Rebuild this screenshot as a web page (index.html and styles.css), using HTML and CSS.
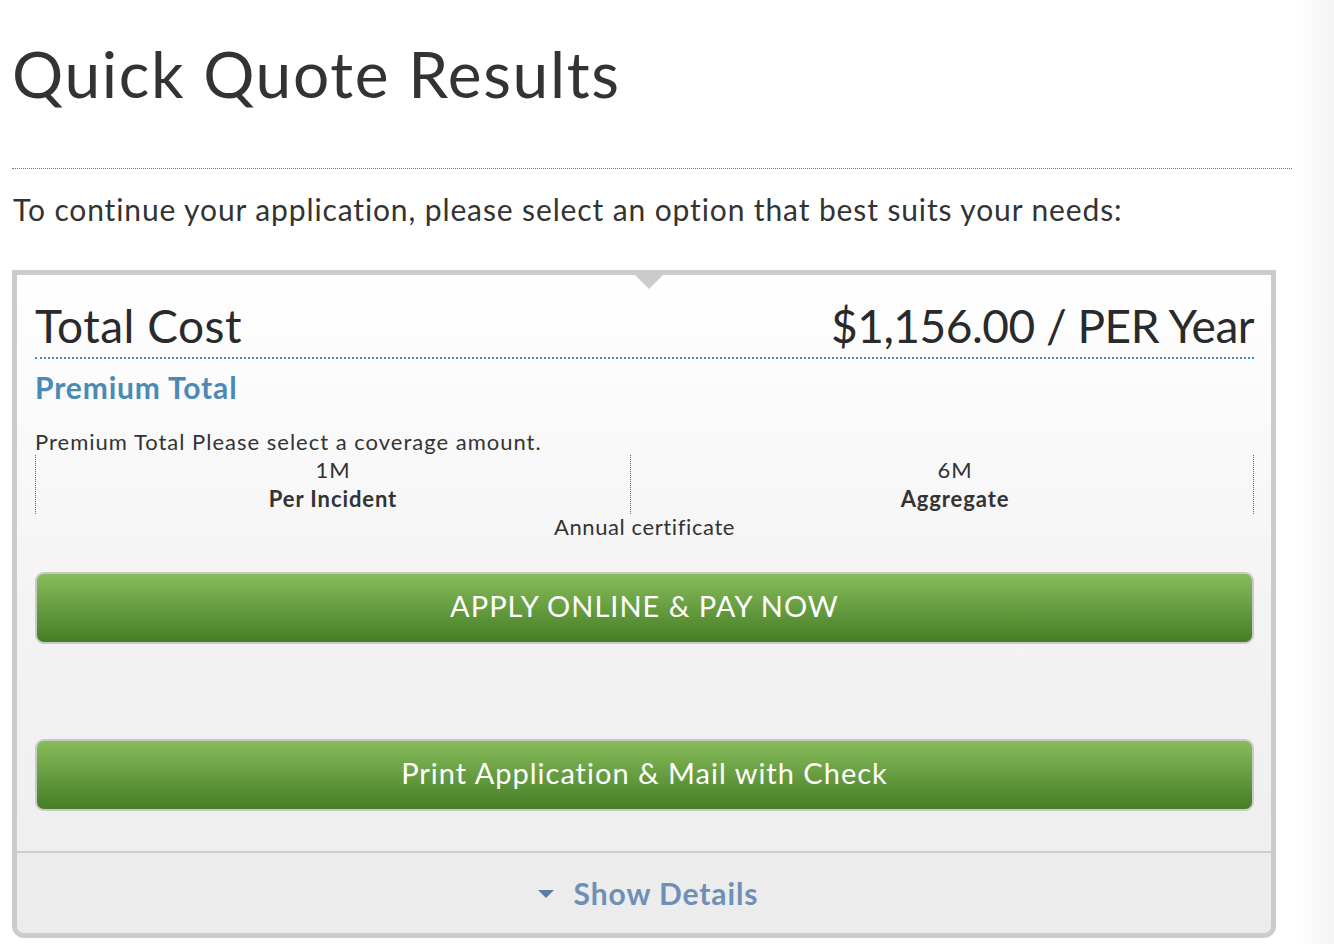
FILE: index.html
```html
<!DOCTYPE html>
<html>
<head>
<meta charset="utf-8">
<title>Quick Quote Results</title>
<link rel="stylesheet" href="styles.css">
</head>
<body>
<div class="page">
  <h1 class="title">Quick Quote Results</h1>
  <div class="rule"></div>
  <p class="intro">To continue your application, please select an option that best suits your needs:</p>
  <div class="box">
    <div class="notch"></div>
    <div class="main">
      <div class="cost-row">
        <span class="cost-label">Total Cost</span>
        <span class="cost-value">$1,156.00 / PER Year</span>
      </div>
      <div class="premium">Premium Total</div>
      <div class="note">Premium Total Please select a coverage amount.</div>
      <div class="limits">
        <div class="limit">
          <div class="limit-amt">1M</div>
          <div class="limit-name">Per Incident</div>
        </div>
        <div class="limit limit-right">
          <div class="limit-amt">6M</div>
          <div class="limit-name">Aggregate</div>
        </div>
      </div>
      <div class="cert">Annual certificate</div>
      <div class="btn btn-first">APPLY ONLINE &amp; PAY NOW</div>
      <div class="btn btn-second">Print Application &amp; Mail with Check</div>
    </div>
    <div class="details">
      <span class="caret"></span>
      <span class="details-text">Show Details</span>
    </div>
  </div>
</div>
</body>
</html>
```

FILE: styles.css
```css
html, body {
  margin: 0;
  padding: 0;
}
body {
  width: 1334px;
  height: 944px;
  overflow: hidden;
  font-family: Lato, "Open Sans", sans-serif;
  color: #333;
  background: linear-gradient(to right, #ffffff 0, #ffffff 1292px, #f5f5f5 1334px);
}
.page {
  padding: 0 42px 0 12px;
}
.title {
  margin: 0;
  padding-top: 31px;
  font-size: 64px;
  font-weight: 400;
  line-height: 86px;
  color: #333;
  letter-spacing: 1.65px;
}
.rule {
  margin-top: 51px;
  border-top: 1px dotted #777;
}
.intro {
  margin: 22px 0 0 1px;
  font-size: 30px;
  line-height: 36px;
  color: #333;
  letter-spacing: 0.88px;
}
.box {
  position: relative;
  margin-top: 43px;
  width: 1254px;
  border: 5px solid #ccc;
  border-radius: 0 0 12px 12px;
  background: #ececec;
}
.notch {
  position: absolute;
  left: 618px;
  top: 0;
  width: 0;
  height: 0;
  border-left: 14px solid transparent;
  border-right: 14px solid transparent;
  border-top: 14px solid #ccc;
}
.main {
  padding: 22px 17px 40px 18px;
  background: linear-gradient(to bottom, #ffffff 0, #f3f3f3 60%, #efefef 100%);
  border-bottom: 2px solid #ccc;
}
.cost-row {
  display: flex;
  justify-content: space-between;
  align-items: baseline;
  border-bottom: 2px dotted #4a8ab8;
  padding-bottom: 2px;
}
.cost-label, .cost-value {
  font-size: 46px;
  line-height: 58px;
  color: #2a2a2a;
}
.cost-label {
  letter-spacing: 0.5px;
}
.cost-value {
  letter-spacing: -0.5px;
}
.premium {
  margin-top: 10px;
  font-size: 30px;
  line-height: 36px;
  font-weight: 700;
  color: #4a8ab4;
  letter-spacing: 0.85px;
}
.note {
  margin-top: 23px;
  font-size: 22px;
  line-height: 27px;
  color: #333;
  letter-spacing: 1px;
}
.limits {
  display: grid;
  grid-template-columns: 595px 1fr;
  border-right: 1px dotted #2f73aa;
}
.limit {
  border-left: 1px dotted #2f73aa;
  text-align: center;
  font-size: 22px;
  line-height: 29px;
  padding-bottom: 1px;
  letter-spacing: 0.9px;
}
.limit-right {
  padding-left: 26px;
}
.limit-name {
  font-weight: 700;
}
.cert {
  text-align: center;
  font-size: 22px;
  line-height: 26px;
  letter-spacing: 0.6px;
}
.btn {
  height: 68px;
  border: 2px solid #c9c9c9;
  border-radius: 9px;
  background: linear-gradient(to bottom, #86bc5a 0, #6aa043 45%, #467d25 100%);
  color: #fff;
  text-align: center;
  font-size: 29px;
  line-height: 64px;
  letter-spacing: 1px;
  box-sizing: content-box;
}
.btn-first {
  margin-top: 32px;
}
.btn-second {
  margin-top: 95px;
}
.details {
  height: 80px;
  display: flex;
  align-items: center;
  justify-content: center;
  gap: 20px;
  padding-left: 8px;
}
.caret {
  width: 0;
  height: 0;
  border-left: 8px solid transparent;
  border-right: 8px solid transparent;
  border-top: 8px solid #5a7ea8;
  margin-top: 2px;
}
.details-text {
  font-size: 30px;
  font-weight: 700;
  color: #6f8fb6;
  letter-spacing: 0.9px;
}
```
